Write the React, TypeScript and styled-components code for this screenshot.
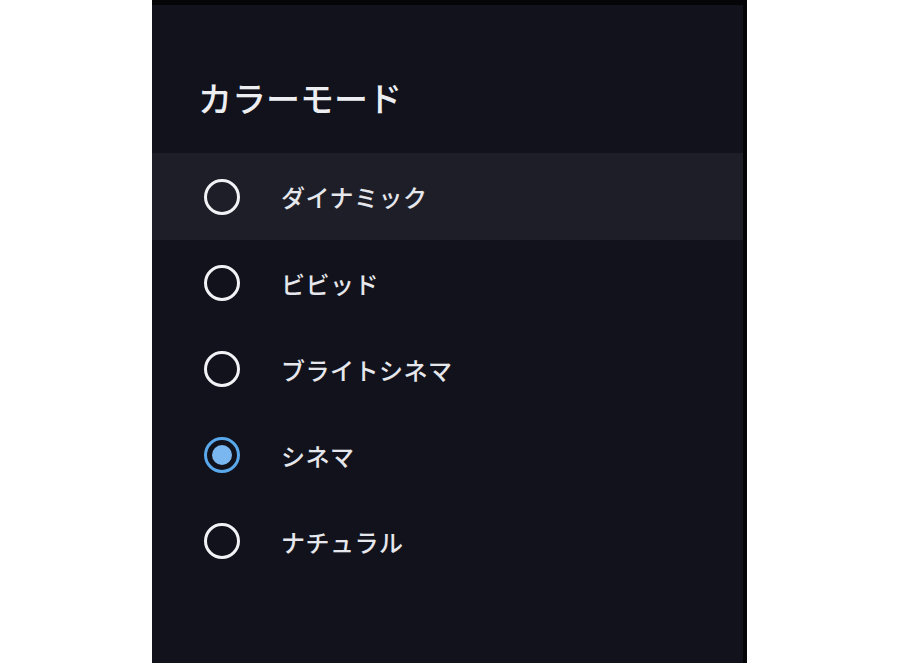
import styled, { createGlobalStyle } from 'styled-components'

const Global = createGlobalStyle`
  html, body {
    margin: 0;
    padding: 0;
    background: #ffffff;
  }
  body {
    font-family: "Noto Sans CJK JP", "Noto Sans", sans-serif;
  }
`

const Page = styled.div`
  display: flex;
  height: 663px;
  padding-left: 152px;
  box-sizing: border-box;
`

const Panel = styled.div`
  width: 595px;
  height: 100%;
  background: #11121b;
  border-top: 5px solid #050508;
  border-right: 4px solid #050507;
  box-sizing: border-box;
  display: flex;
  flex-direction: column;
`

const Header = styled.h1`
  margin: 0;
  height: 148px;
  padding: 76px 0 0 46px;
  box-sizing: border-box;
  font-size: 34px;
  line-height: 1;
  font-weight: 500;
  color: #eceef2;
`

const List = styled.ul`
  margin: 0;
  padding: 0;
  list-style: none;
`

const Row = styled.li<{ $focused?: boolean }>`
  height: 86px;
  display: flex;
  align-items: center;
  gap: 41px;
  padding-left: 52px;
  background: ${(p) => (p.$focused ? '#1d1e27' : 'transparent')};
  &:first-child {
    height: 87px;
  }
`

const Radio = styled.span<{ $checked?: boolean }>`
  width: 36px;
  height: 36px;
  border-radius: 50%;
  box-sizing: border-box;
  border: 3px solid ${(p) => (p.$checked ? '#5aa8ec' : '#f2f2f6')};
  display: flex;
  align-items: center;
  justify-content: center;
  flex-shrink: 0;

  &::after {
    content: '';
    display: ${(p) => (p.$checked ? 'block' : 'none')};
    width: 20px;
    height: 20px;
    border-radius: 50%;
    background: #7ab7f0;
  }
`

const Label = styled.span`
  font-size: 24px;
  font-weight: 500;
  color: #e6e7ec;
  letter-spacing: 0.5px;
`

const modes = ['ダイナミック', 'ビビッド', 'ブライトシネマ', 'シネマ', 'ナチュラル']

export default function App() {
  return (
    <>
      <Global />
      <Page>
        <Panel>
          <Header>カラーモード</Header>
          <List>
            {modes.map((m, i) => (
              <Row key={m} $focused={i === 0}>
                <Radio $checked={m === 'シネマ'} />
                <Label>{m}</Label>
              </Row>
            ))}
          </List>
        </Panel>
      </Page>
    </>
  )
}
